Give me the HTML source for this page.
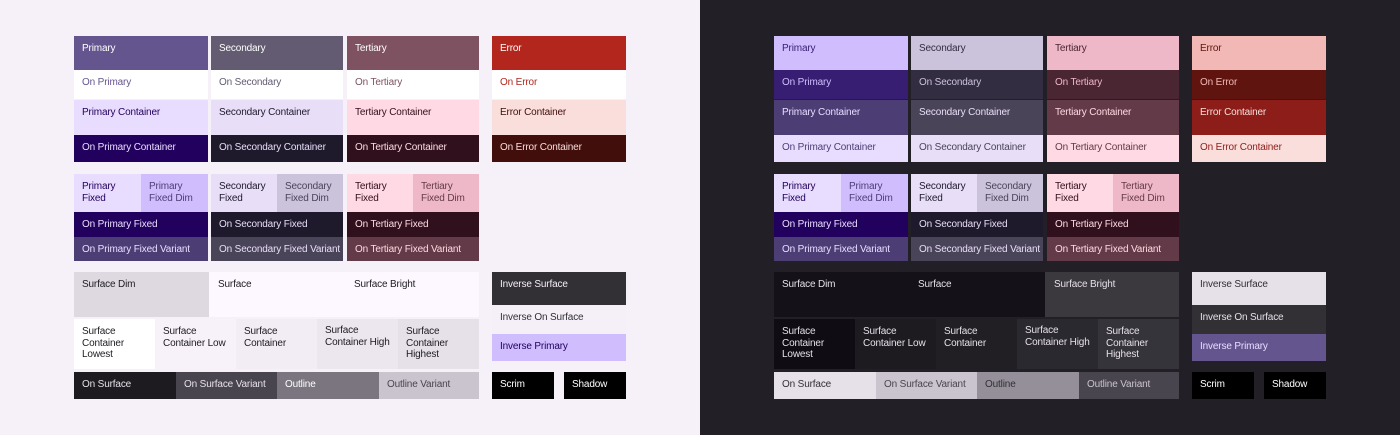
<!DOCTYPE html>
<html><head><meta charset="utf-8">
<style>
*{margin:0;padding:0;box-sizing:border-box}
body{width:1400px;height:435px;overflow:hidden;font-family:"Liberation Sans",sans-serif;font-size:10px;position:relative;letter-spacing:-0.15px}
.p{position:absolute;top:0;height:435px;width:700px}
.p div{position:absolute;padding:7px 8px 0 8px;line-height:11.5px;white-space:nowrap;overflow:hidden}
.light{left:0;background:#f6f0f8;
--pr:#65558f;--opr:#fff;--pc:#e9ddff;--opc:#22005d;
--se:#625b71;--ose:#fff;--sc:#e8def8;--osc:#1e192b;
--te:#7e5260;--ote:#fff;--tc:#ffd9e3;--otc:#31101d;
--er:#b3261e;--oer:#fff;--ec:#f9dedc;--oec:#410e0b;
--sd:#ded8e0;--su:#fdf7ff;--sb:#fdf7ff;--c0:#fff;--c1:#f7f2fa;--c2:#f2ecf4;--c3:#ece6ee;--c4:#e6e0e9;
--os:#1d1b20;--osv:#49454e;--ol:#7a757f;--olv:#cac4cf;
--is:#322f35;--ios:#f5eff7;--ip:#cfbdfe;--ipt:#22005d;--txt:#1d1b20}
.dark{left:700px;background:#222026;
--pr:#cfbdfe;--opr:#381e72;--pc:#4d3d75;--opc:#e9ddff;
--se:#cbc2db;--ose:#332d41;--sc:#4a4458;--osc:#e8def8;
--te:#efb8c8;--ote:#4a2532;--tc:#633b48;--otc:#ffd9e3;
--er:#f2b8b5;--oer:#601410;--ec:#8c1d18;--oec:#f9dedc;
--sd:#141218;--su:#141218;--sb:#3b383e;--c0:#0f0d13;--c1:#1d1b20;--c2:#211f24;--c3:#2b2930;--c4:#36343b;
--os:#e6e0e9;--osv:#cac4cf;--ol:#948f99;--olv:#49454e;
--is:#e6e0e9;--ios:#322f35;--ip:#65558f;--ipt:#e9ddff;--txt:#e6e0e9}
</style></head><body>

<div class="p light">
<div style="left:74px;top:36px;width:134px;height:34px;background:var(--pr);color:var(--opr)">Primary</div>
<div style="left:74px;top:70px;width:134px;height:29px;background:var(--opr);color:var(--pr)">On Primary</div>
<div style="left:74px;top:100px;width:134px;height:35px;background:var(--pc);color:var(--opc)">Primary Container</div>
<div style="left:74px;top:135px;width:134px;height:27px;background:var(--opc);color:var(--pc)">On Primary Container</div>
<div style="left:211px;top:36px;width:132px;height:34px;background:var(--se);color:var(--ose)">Secondary</div>
<div style="left:211px;top:70px;width:132px;height:29px;background:var(--ose);color:var(--se)">On Secondary</div>
<div style="left:211px;top:100px;width:132px;height:35px;background:var(--sc);color:var(--osc)">Secondary Container</div>
<div style="left:211px;top:135px;width:132px;height:27px;background:var(--osc);color:var(--sc)">On Secondary Container</div>
<div style="left:347px;top:36px;width:132px;height:34px;background:var(--te);color:var(--ote)">Tertiary</div>
<div style="left:347px;top:70px;width:132px;height:29px;background:var(--ote);color:var(--te)">On Tertiary</div>
<div style="left:347px;top:100px;width:132px;height:35px;background:var(--tc);color:var(--otc)">Tertiary Container</div>
<div style="left:347px;top:135px;width:132px;height:27px;background:var(--otc);color:var(--tc)">On Tertiary Container</div>
<div style="left:492px;top:36px;width:134px;height:34px;background:var(--er);color:var(--oer)">Error</div>
<div style="left:492px;top:70px;width:134px;height:29px;background:var(--oer);color:var(--er)">On Error</div>
<div style="left:492px;top:100px;width:134px;height:35px;background:var(--ec);color:var(--oec)">Error Container</div>
<div style="left:492px;top:135px;width:134px;height:27px;background:var(--oec);color:var(--ec)">On Error Container</div>

<div style="left:74px;top:174px;width:67px;height:38px;background:#e9ddff;color:#22005d">Primary<br>Fixed</div>
<div style="left:141px;top:174px;width:67px;height:38px;background:#cfbdfe;color:#4d3d75">Primary<br>Fixed Dim</div>
<div style="left:74px;top:212px;width:134px;height:25px;background:#22005d;color:#e9ddff">On Primary Fixed</div>
<div style="left:74px;top:237px;width:134px;height:24px;background:#4d3d75;color:#e9ddff">On Primary Fixed Variant</div>
<div style="left:211px;top:174px;width:66px;height:38px;background:#e8def8;color:#1e192b">Secondary<br>Fixed</div>
<div style="left:277px;top:174px;width:66px;height:38px;background:#cbc2db;color:#4a4458">Secondary<br>Fixed Dim</div>
<div style="left:211px;top:212px;width:132px;height:25px;background:#1e192b;color:#e8def8">On Secondary Fixed</div>
<div style="left:211px;top:237px;width:132px;height:24px;background:#4a4458;color:#e8def8">On Secondary Fixed Variant</div>
<div style="left:347px;top:174px;width:66px;height:38px;background:#ffd9e3;color:#31101d">Tertiary<br>Fixed</div>
<div style="left:413px;top:174px;width:66px;height:38px;background:#efb8c8;color:#633b48">Tertiary<br>Fixed Dim</div>
<div style="left:347px;top:212px;width:132px;height:25px;background:#31101d;color:#ffd9e3">On Tertiary Fixed</div>
<div style="left:347px;top:237px;width:132px;height:24px;background:#633b48;color:#ffd9e3">On Tertiary Fixed Variant</div>

<div style="left:74px;top:272px;width:135px;height:45px;background:var(--sd);color:var(--txt)">Surface Dim</div>
<div style="left:209px;top:272px;width:136px;height:45px;background:var(--su);color:var(--txt);padding-left:9px">Surface</div>
<div style="left:345px;top:272px;width:134px;height:45px;background:var(--sb);color:var(--txt);padding-left:9px">Surface Bright</div>
<div style="left:74px;top:319px;width:81px;height:50px;background:var(--c0);color:var(--txt)">Surface<br>Container<br>Lowest</div>
<div style="left:155px;top:319px;width:81px;height:50px;background:var(--c1);color:var(--txt)">Surface<br>Container Low</div>
<div style="left:236px;top:319px;width:81px;height:50px;background:var(--c2);color:var(--txt)">Surface<br>Container</div>
<div style="left:317px;top:319px;width:81px;height:50px;background:var(--c3);color:var(--txt);padding-top:6px">Surface<br>Container High</div>
<div style="left:398px;top:319px;width:81px;height:50px;background:var(--c4);color:var(--txt)">Surface<br>Container<br>Highest</div>
<div style="left:74px;top:372px;width:102px;height:27px;background:var(--os);color:var(--c4)">On Surface</div>
<div style="left:176px;top:372px;width:101px;height:27px;background:var(--osv);color:var(--c4)">On Surface Variant</div>
<div style="left:277px;top:372px;width:102px;height:27px;background:var(--ol);color:var(--c0)">Outline</div>
<div style="left:379px;top:372px;width:100px;height:27px;background:var(--olv);color:var(--osv)">Outline Variant</div>
<div style="left:492px;top:272px;width:134px;height:33px;background:var(--is);color:var(--ios)">Inverse Surface</div>
<div style="left:492px;top:305px;width:134px;height:29px;background:var(--ios);color:var(--is)">Inverse On Surface</div>
<div style="left:492px;top:334px;width:134px;height:27px;background:var(--ip);color:var(--ipt)">Inverse Primary</div>
<div style="left:492px;top:372px;width:62px;height:27px;background:#000;color:#fff">Scrim</div>
<div style="left:564px;top:372px;width:62px;height:27px;background:#000;color:#fff">Shadow</div>
</div>

<div class="p dark">
<div style="left:74px;top:36px;width:134px;height:34px;background:var(--pr);color:var(--opr)">Primary</div>
<div style="left:74px;top:70px;width:134px;height:29px;background:var(--opr);color:var(--pr)">On Primary</div>
<div style="left:74px;top:100px;width:134px;height:35px;background:var(--pc);color:var(--opc)">Primary Container</div>
<div style="left:74px;top:135px;width:134px;height:27px;background:var(--opc);color:var(--pc)">On Primary Container</div>
<div style="left:211px;top:36px;width:132px;height:34px;background:var(--se);color:var(--ose)">Secondary</div>
<div style="left:211px;top:70px;width:132px;height:29px;background:var(--ose);color:var(--se)">On Secondary</div>
<div style="left:211px;top:100px;width:132px;height:35px;background:var(--sc);color:var(--osc)">Secondary Container</div>
<div style="left:211px;top:135px;width:132px;height:27px;background:var(--osc);color:var(--sc)">On Secondary Container</div>
<div style="left:347px;top:36px;width:132px;height:34px;background:var(--te);color:var(--ote)">Tertiary</div>
<div style="left:347px;top:70px;width:132px;height:29px;background:var(--ote);color:var(--te)">On Tertiary</div>
<div style="left:347px;top:100px;width:132px;height:35px;background:var(--tc);color:var(--otc)">Tertiary Container</div>
<div style="left:347px;top:135px;width:132px;height:27px;background:var(--otc);color:var(--tc)">On Tertiary Container</div>
<div style="left:492px;top:36px;width:134px;height:34px;background:var(--er);color:var(--oer)">Error</div>
<div style="left:492px;top:70px;width:134px;height:29px;background:var(--oer);color:var(--er)">On Error</div>
<div style="left:492px;top:100px;width:134px;height:35px;background:var(--ec);color:var(--oec)">Error Container</div>
<div style="left:492px;top:135px;width:134px;height:27px;background:var(--oec);color:var(--ec)">On Error Container</div>

<div style="left:74px;top:174px;width:67px;height:38px;background:#e9ddff;color:#22005d">Primary<br>Fixed</div>
<div style="left:141px;top:174px;width:67px;height:38px;background:#cfbdfe;color:#4d3d75">Primary<br>Fixed Dim</div>
<div style="left:74px;top:212px;width:134px;height:25px;background:#22005d;color:#e9ddff">On Primary Fixed</div>
<div style="left:74px;top:237px;width:134px;height:24px;background:#4d3d75;color:#e9ddff">On Primary Fixed Variant</div>
<div style="left:211px;top:174px;width:66px;height:38px;background:#e8def8;color:#1e192b">Secondary<br>Fixed</div>
<div style="left:277px;top:174px;width:66px;height:38px;background:#cbc2db;color:#4a4458">Secondary<br>Fixed Dim</div>
<div style="left:211px;top:212px;width:132px;height:25px;background:#1e192b;color:#e8def8">On Secondary Fixed</div>
<div style="left:211px;top:237px;width:132px;height:24px;background:#4a4458;color:#e8def8">On Secondary Fixed Variant</div>
<div style="left:347px;top:174px;width:66px;height:38px;background:#ffd9e3;color:#31101d">Tertiary<br>Fixed</div>
<div style="left:413px;top:174px;width:66px;height:38px;background:#efb8c8;color:#633b48">Tertiary<br>Fixed Dim</div>
<div style="left:347px;top:212px;width:132px;height:25px;background:#31101d;color:#ffd9e3">On Tertiary Fixed</div>
<div style="left:347px;top:237px;width:132px;height:24px;background:#633b48;color:#ffd9e3">On Tertiary Fixed Variant</div>

<div style="left:74px;top:272px;width:135px;height:45px;background:var(--sd);color:var(--txt)">Surface Dim</div>
<div style="left:209px;top:272px;width:136px;height:45px;background:var(--su);color:var(--txt);padding-left:9px">Surface</div>
<div style="left:345px;top:272px;width:134px;height:45px;background:var(--sb);color:var(--txt);padding-left:9px">Surface Bright</div>
<div style="left:74px;top:319px;width:81px;height:50px;background:var(--c0);color:var(--txt)">Surface<br>Container<br>Lowest</div>
<div style="left:155px;top:319px;width:81px;height:50px;background:var(--c1);color:var(--txt)">Surface<br>Container Low</div>
<div style="left:236px;top:319px;width:81px;height:50px;background:var(--c2);color:var(--txt)">Surface<br>Container</div>
<div style="left:317px;top:319px;width:81px;height:50px;background:var(--c3);color:var(--txt);padding-top:6px">Surface<br>Container High</div>
<div style="left:398px;top:319px;width:81px;height:50px;background:var(--c4);color:var(--txt)">Surface<br>Container<br>Highest</div>
<div style="left:74px;top:372px;width:102px;height:27px;background:var(--os);color:#322f35">On Surface</div>
<div style="left:176px;top:372px;width:101px;height:27px;background:var(--osv);color:#49454e">On Surface Variant</div>
<div style="left:277px;top:372px;width:102px;height:27px;background:var(--ol);color:#322f35">Outline</div>
<div style="left:379px;top:372px;width:100px;height:27px;background:var(--olv);color:var(--osv)">Outline Variant</div>
<div style="left:492px;top:272px;width:134px;height:33px;background:var(--is);color:var(--ios)">Inverse Surface</div>
<div style="left:492px;top:305px;width:134px;height:29px;background:var(--ios);color:var(--is)">Inverse On Surface</div>
<div style="left:492px;top:334px;width:134px;height:27px;background:var(--ip);color:var(--ipt)">Inverse Primary</div>
<div style="left:492px;top:372px;width:62px;height:27px;background:#000;color:#fff">Scrim</div>
<div style="left:564px;top:372px;width:62px;height:27px;background:#000;color:#fff">Shadow</div>
</div>
</body></html>
